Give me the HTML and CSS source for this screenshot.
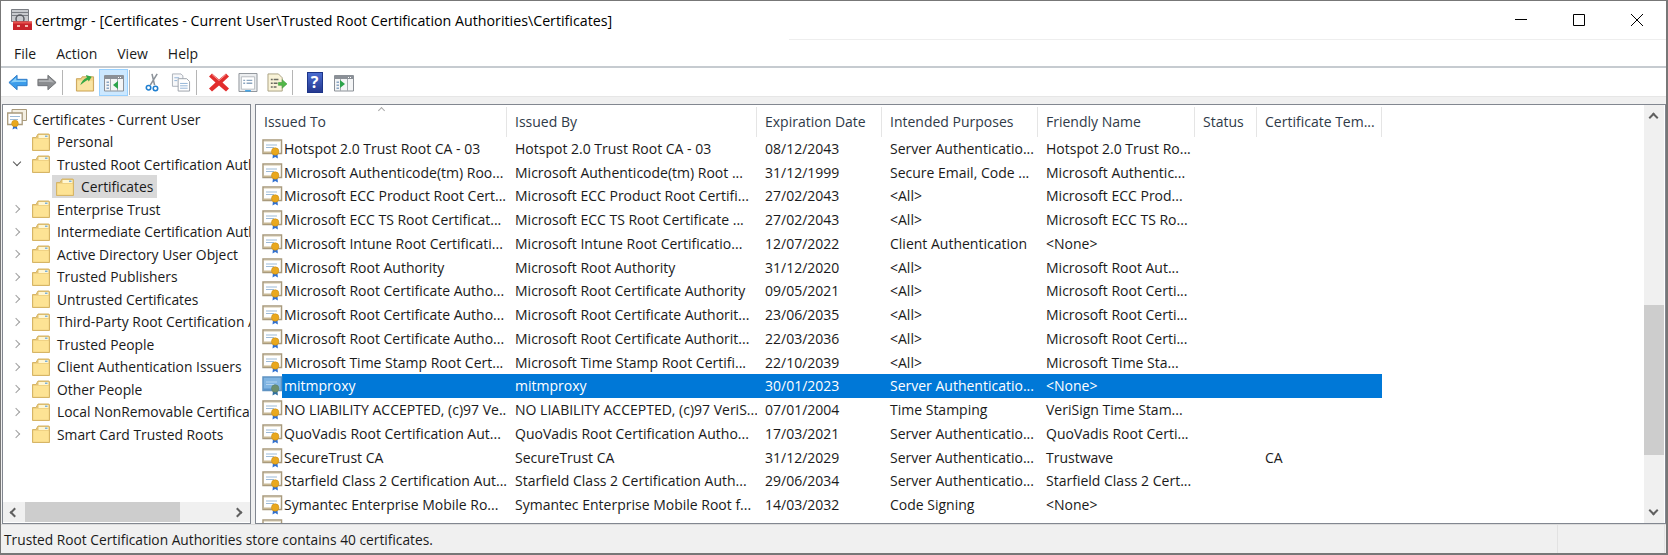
FILE: index.html
```html
<!doctype html>
<html>
<head>
<meta charset="utf-8">
<title>certmgr</title>
<link rel="stylesheet" href="styles.css">
</head>
<body>
<svg class="defs" width="0" height="0">
	<symbol id="folder" viewBox="0 0 18 18">
		<path d="M.5 4.500h3.500L6 1h10.500c.6 0 1 .4 1 1v15.500H.5z" fill="#e3c272" stroke="#d6b566"/>
		<path d="M6.500 2h10v3h-10z" fill="#fff6d2"/>
		<path d="M1.200 5.500h15.600v11.300H1.200z" fill="#fde394"/>
		<path d="M13 2.500h2.500v1.500H13z" fill="#7fb2d8"/>
	</symbol>
	<symbol id="cert" viewBox="0 0 21 21">
		<path d="M1 2h18.500v13.500H1z" fill="#fff" stroke="#a99a7c" stroke-width="1.500"/>
		<path d="M1.500 13.500h11v1.500H1.500z" fill="#c9b994"/>
		<path d="M2 3h16.500v1H2z" fill="#e9e2d0"/>
		<path d="M4 6.500h11v1H4zM4 9h8v1H4z" fill="#9dbbd8"/>
		<path d="M11 15.500l-.5 5 2.700-1.500 2.700 1.500-.5-5z" fill="#2f6fd0"/>
		<circle cx="13.200" cy="13.500" r="3.700" fill="#e9a81e" stroke="#cb8d12" stroke-width=".6"/>
	</symbol>
	<symbol id="cert-sel" viewBox="0 0 21 21">
		<path d="M1 2h18.500v13.500H1z" fill="#7fb4e2" stroke="#5f93c2" stroke-width="1.500"/>
		<path d="M1.500 13.500h11v1.500H1.500z" fill="#5a94cc"/>
		<path d="M4 6.500h11v1H4zM4 9h8v1H4z" fill="#b4d4f0"/>
		<path d="M11 15.500l-.5 5 2.700-1.500 2.700 1.500-.5-5z" fill="#2f6fa0"/>
		<circle cx="13.200" cy="13.500" r="3.700" fill="#6c8f70" stroke="#5c7f68" stroke-width=".6"/>
	</symbol>
	<symbol id="store" viewBox="0 0 20 22">
		<path d="M5 1.500h14.500v11H5z" fill="#f4efe2" stroke="#a99a7c"/>
		<path d="M.7 5h14.500v11.500H.7z" fill="#fff" stroke="#a99a7c" stroke-width="1.300"/>
		<path d="M3 8h10v1H3zM3 11h8v1H3z" fill="#9dbbd8"/>
		<path d="M6.500 17l-1 4.500 2.500-1.300 2.500 1.300-1-4.500z" fill="#2f6fd0"/>
		<circle cx="8" cy="15.500" r="3.300" fill="#e9a81e" stroke="#cb8d12" stroke-width=".6"/>
	</symbol>
	<symbol id="pane" viewBox="0 0 20 18">
		<path d="M.5 1.500h19v15.500H.5z" fill="#f4f5f6" stroke="#8b9097"/>
		<path d="M1 2h18v3H1z" fill="#8b9097"/>
		<path d="M14 3h1v1h-1zM16 3h1v1h-1z" fill="#fff"/>
		<path d="M6.500 5v12M13.500 5v12" stroke="#a5aab0"/>
		<path d="M2.500 7.500h2.500v1.500H2.500zM2.500 10.500h2.500v1.500H2.500zM2.500 13.500h2.500v1.500H2.500z" fill="#8aa6c4"/>
	</symbol>
	<linearGradient id="helpfill" x1="0" y1="0" x2="0" y2="1">
		<stop offset="0" stop-color="#4a6cd0"/>
		<stop offset="1" stop-color="#26388f"/>
	</linearGradient>
</svg>

<div class="window">
	<div class="titlebar">
		<svg class="appicon" viewBox="0 0 21 22">
			<path d="M.5.500h17v12H.5z" fill="#c9cbcf" stroke="#7a7d83"/>
			<path d="M1 3.500h16M1 6.500h16" stroke="#7a7d83"/>
			<circle cx="9" cy="10" r="4" fill="none" stroke="#5a5c62" stroke-width="1.500"/>
			<path d="M2 12.500h19V21H2z" fill="#c8232a"/>
			<path d="M2 12.500h19v2H2z" fill="#e6534f"/>
			<path d="M6 16h3v2H6zM14 16h3v2h-3z" fill="#f3b9b0"/>
		</svg>
		<span class="title">certmgr - [Certificates - Current User\Trusted Root Certification Authorities\Certificates]</span>
		<div class="winbtns">
			<svg viewBox="0 0 12 12"><path d="M0 5.500h12" stroke="#000" fill="none"/></svg>
			<svg viewBox="0 0 12 12"><path d="M.5.500h11v11H.500z" stroke="#000" fill="none"/></svg>
			<svg viewBox="0 0 12 12"><path d="M0 0l12 12M12 0L0 12" stroke="#000" fill="none"/></svg>
		</div>
	</div>
	<div class="menubar">
		<span>File</span><span>Action</span><span>View</span><span>Help</span>
	</div>
	<div class="toolbar">
		<div class="tool">
			<svg viewBox="0 0 22 20"><path d="M1 10l9-8v4.500h11v7H10V18z" fill="#3b9cea" stroke="#2a78c4"/><path d="M3 10l6-5.500v3h11v2H9z" fill="#8cd0f8"/></svg>
		</div>
		<div class="tool">
			<svg viewBox="0 0 22 20"><path d="M21 10l-9-8v4.500H1v7h11V18z" fill="#8a8c8f" stroke="#6c6e72"/><path d="M19 10l-6-5.500v3H2v2h11z" fill="#b0b2b5"/></svg>
		</div>
		<div class="sep"></div>
		<div class="tool">
			<svg viewBox="0 0 20 20"><path d="M1 6h5l1-2h12v15H1z" fill="#f2d589" stroke="#c9a256"/><path d="M2 8h16v10H2z" fill="#f9e4a4"/><path d="M5 13c1-4 4-7 7-8l-1-3 6 2-3 5-1-2c-2 1-5 3-8 6z" fill="#35a845"/></svg>
		</div>
		<div class="tool on">
			<svg class="paneicon"><use href="#pane"/></svg>
			<svg class="mark" viewBox="0 0 6 8"><path d="M5 0v8L0 4z" fill="#2ca34a"/></svg>
		</div>
		<div class="sep"></div>
		<div class="tool">
			<svg viewBox="0 0 16 22"><path d="M14 1L6 14M8 1l3 13" stroke="#8c9299" stroke-width="1.800" fill="none"/><circle cx="4" cy="17" r="2.600" fill="none" stroke="#1f7fd0" stroke-width="1.800"/><circle cx="12" cy="18" r="2.600" fill="none" stroke="#1f7fd0" stroke-width="1.800"/></svg>
		</div>
		<div class="tool">
			<svg viewBox="0 0 20 20"><path d="M1 1h9l2 2v11H1z" fill="#f7f8fa" stroke="#aab0b8"/><path d="M7 6h9l3 3v10H7z" fill="#fff" stroke="#9aa0a8"/><path d="M3 5h5M3 8h3M9 11h8M9 13.500h8M9 16h8" stroke="#8fb2d6"/></svg>
		</div>
		<div class="sep"></div>
		<div class="tool">
			<svg viewBox="0 0 20 18"><path d="M3 0l7 6 7-6 3 3-6.500 6L20 15l-3 3-7-6-7 6-3-3 6.500-6L0 3z" fill="#e22d2d"/><path d="M3 1l7 6 7-6" stroke="#f4908c" fill="none"/></svg>
		</div>
		<div class="tool">
			<svg viewBox="0 0 20 20"><path d="M.5.500h19v19H.5z" fill="#eceef0" stroke="#8b9097"/><path d="M3 4h14v13H3z" fill="#fff" stroke="#b5b9be"/><path d="M5 7h2v1.500H5zM5 10h2v1.500H5zM8.500 7h6v1.500h-6zM8.500 10h6v1.500h-6z" fill="#8ca6c0"/><path d="M7 18h6v1.500H7z" fill="#35a0e8"/></svg>
		</div>
		<div class="tool">
			<svg viewBox="0 0 21 20"><path d="M1 1h11l4 4v14H1z" fill="#f9f3d8" stroke="#a8a080"/><path d="M4 6h2v1.500H4zM4 10h2v1.500H4zM4 14h2v1.500H4zM7 6h5v1.500H7zM7 10h4v1.500H7zM7 14h3v1.500H7z" fill="#6a6a60"/><path d="M12 10h4V7l5 4.500-5 4.500v-3h-4z" fill="#52b848" stroke="#3c9a38" stroke-width=".6"/></svg>
		</div>
		<div class="sep"></div>
		<div class="tool">
			<span class="help">?</span>
		</div>
		<div class="tool">
			<svg class="paneicon"><use href="#pane"/></svg>
			<svg class="mark" viewBox="0 0 6 8"><path d="M0 0v8l5-4z" fill="#2ca34a"/></svg>
		</div>
	</div>

	<div class="panes">
		<div class="tree">
			<div class="tree-items">
				<div class="node root"><svg class="ic-store"><use href="#store"/></svg><span>Certificates - Current User</span></div>
				<div class="node"><i class="tw"></i><svg class="ic"><use href="#folder"/></svg><span>Personal</span></div>
				<div class="node"><i class="tw open"></i><svg class="ic"><use href="#folder"/></svg><span>Trusted Root Certification Authorities</span></div>
				<div class="node sub"><div class="cur"><svg class="ic"><use href="#folder"/></svg><span>Certificates</span></div></div>
				<div class="node"><i class="tw closed"></i><svg class="ic"><use href="#folder"/></svg><span>Enterprise Trust</span></div>
				<div class="node"><i class="tw closed"></i><svg class="ic"><use href="#folder"/></svg><span>Intermediate Certification Authorities</span></div>
				<div class="node"><i class="tw closed"></i><svg class="ic"><use href="#folder"/></svg><span>Active Directory User Object</span></div>
				<div class="node"><i class="tw closed"></i><svg class="ic"><use href="#folder"/></svg><span>Trusted Publishers</span></div>
				<div class="node"><i class="tw closed"></i><svg class="ic"><use href="#folder"/></svg><span>Untrusted Certificates</span></div>
				<div class="node"><i class="tw closed"></i><svg class="ic"><use href="#folder"/></svg><span>Third-Party Root Certification Authorities</span></div>
				<div class="node"><i class="tw closed"></i><svg class="ic"><use href="#folder"/></svg><span>Trusted People</span></div>
				<div class="node"><i class="tw closed"></i><svg class="ic"><use href="#folder"/></svg><span>Client Authentication Issuers</span></div>
				<div class="node"><i class="tw closed"></i><svg class="ic"><use href="#folder"/></svg><span>Other People</span></div>
				<div class="node"><i class="tw closed"></i><svg class="ic"><use href="#folder"/></svg><span>Local NonRemovable Certificates</span></div>
				<div class="node"><i class="tw closed"></i><svg class="ic"><use href="#folder"/></svg><span>Smart Card Trusted Roots</span></div>
			</div>
			<div class="hscroll">
				<i class="chev left"></i>
				<div class="htrack"><div class="hthumb"></div></div>
				<i class="chev right"></i>
			</div>
		</div>

		<div class="list">
			<div class="list-main">
				<div class="row head">
					<div class="sorted">Issued To</div><div>Issued By</div><div>Expiration Date</div><div>Intended Purposes</div><div>Friendly Name</div><div>Status</div><div>Certificate Tem...</div>
				</div>
				<div class="row"><div class="name"><svg class="ic"><use href="#cert"/></svg><span>Hotspot 2.0 Trust Root CA - 03</span></div><div>Hotspot 2.0 Trust Root CA - 03</div><div>08/12/2043</div><div>Server Authenticatio...</div><div>Hotspot 2.0 Trust Ro...</div><div></div><div></div></div>
				<div class="row"><div class="name"><svg class="ic"><use href="#cert"/></svg><span>Microsoft Authenticode(tm) Roo...</span></div><div>Microsoft Authenticode(tm) Root ...</div><div>31/12/1999</div><div>Secure Email, Code ...</div><div>Microsoft Authentic...</div><div></div><div></div></div>
				<div class="row"><div class="name"><svg class="ic"><use href="#cert"/></svg><span>Microsoft ECC Product Root Cert...</span></div><div>Microsoft ECC Product Root Certifi...</div><div>27/02/2043</div><div>&lt;All&gt;</div><div>Microsoft ECC Prod...</div><div></div><div></div></div>
				<div class="row"><div class="name"><svg class="ic"><use href="#cert"/></svg><span>Microsoft ECC TS Root Certificat...</span></div><div>Microsoft ECC TS Root Certificate ...</div><div>27/02/2043</div><div>&lt;All&gt;</div><div>Microsoft ECC TS Ro...</div><div></div><div></div></div>
				<div class="row"><div class="name"><svg class="ic"><use href="#cert"/></svg><span>Microsoft Intune Root Certificati...</span></div><div>Microsoft Intune Root Certificatio...</div><div>12/07/2022</div><div>Client Authentication</div><div>&lt;None&gt;</div><div></div><div></div></div>
				<div class="row"><div class="name"><svg class="ic"><use href="#cert"/></svg><span>Microsoft Root Authority</span></div><div>Microsoft Root Authority</div><div>31/12/2020</div><div>&lt;All&gt;</div><div>Microsoft Root Aut...</div><div></div><div></div></div>
				<div class="row"><div class="name"><svg class="ic"><use href="#cert"/></svg><span>Microsoft Root Certificate Autho...</span></div><div>Microsoft Root Certificate Authority</div><div>09/05/2021</div><div>&lt;All&gt;</div><div>Microsoft Root Certi...</div><div></div><div></div></div>
				<div class="row"><div class="name"><svg class="ic"><use href="#cert"/></svg><span>Microsoft Root Certificate Autho...</span></div><div>Microsoft Root Certificate Authorit...</div><div>23/06/2035</div><div>&lt;All&gt;</div><div>Microsoft Root Certi...</div><div></div><div></div></div>
				<div class="row"><div class="name"><svg class="ic"><use href="#cert"/></svg><span>Microsoft Root Certificate Autho...</span></div><div>Microsoft Root Certificate Authorit...</div><div>22/03/2036</div><div>&lt;All&gt;</div><div>Microsoft Root Certi...</div><div></div><div></div></div>
				<div class="row"><div class="name"><svg class="ic"><use href="#cert"/></svg><span>Microsoft Time Stamp Root Cert...</span></div><div>Microsoft Time Stamp Root Certifi...</div><div>22/10/2039</div><div>&lt;All&gt;</div><div>Microsoft Time Sta...</div><div></div><div></div></div>
				<div class="row selected"><div class="name"><svg class="ic"><use href="#cert-sel"/></svg><span>mitmproxy</span></div><div>mitmproxy</div><div>30/01/2023</div><div>Server Authenticatio...</div><div>&lt;None&gt;</div><div></div><div></div></div>
				<div class="row"><div class="name"><svg class="ic"><use href="#cert"/></svg><span>NO LIABILITY ACCEPTED, (c)97 Ve...</span></div><div>NO LIABILITY ACCEPTED, (c)97 VeriS...</div><div>07/01/2004</div><div>Time Stamping</div><div>VeriSign Time Stam...</div><div></div><div></div></div>
				<div class="row"><div class="name"><svg class="ic"><use href="#cert"/></svg><span>QuoVadis Root Certification Aut...</span></div><div>QuoVadis Root Certification Autho...</div><div>17/03/2021</div><div>Server Authenticatio...</div><div>QuoVadis Root Certi...</div><div></div><div></div></div>
				<div class="row"><div class="name"><svg class="ic"><use href="#cert"/></svg><span>SecureTrust CA</span></div><div>SecureTrust CA</div><div>31/12/2029</div><div>Server Authenticatio...</div><div>Trustwave</div><div></div><div>CA</div></div>
				<div class="row"><div class="name"><svg class="ic"><use href="#cert"/></svg><span>Starfield Class 2 Certification Aut...</span></div><div>Starfield Class 2 Certification Auth...</div><div>29/06/2034</div><div>Server Authenticatio...</div><div>Starfield Class 2 Cert...</div><div></div><div></div></div>
				<div class="row"><div class="name"><svg class="ic"><use href="#cert"/></svg><span>Symantec Enterprise Mobile Ro...</span></div><div>Symantec Enterprise Mobile Root f...</div><div>14/03/2032</div><div>Code Signing</div><div>&lt;None&gt;</div><div></div><div></div></div>
				<div class="row"><div class="name"><svg class="ic"><use href="#cert"/></svg></div></div>
			</div>
			<div class="vscroll">
				<i class="chev up"></i>
				<div class="vtrack"><div class="vthumb"></div></div>
				<i class="chev down"></i>
			</div>
		</div>
	</div>

	<div class="statusbar">
		<div class="status-text">Trusted Root Certification Authorities store contains 40 certificates.</div>
		<div class="status-cell"></div>
	</div>
</div>
</body>
</html>
```

FILE: styles.css
```css
html,body{margin:0;padding:0;background:#fff;}
body{font-family:"Open Sans","Noto Sans",sans-serif;font-size:14px;color:#1a1a1a;}
.defs{display:block;height:0;}
svg{display:block;flex:none;}

.window{width:1668px;height:555px;box-sizing:border-box;border:1px solid #777;border-bottom:2px solid #777;border-right:2px solid #777;display:flex;flex-direction:column;overflow:hidden;}

.titlebar{height:38px;display:flex;align-items:center;padding-left:10px;flex:none;}
.appicon{width:21px;height:22px;margin-right:3px;}
.title{font-size:14.24px;color:#000;}
.winbtns{margin-left:auto;display:flex;gap:46px;padding-right:23px;}
.winbtns svg{width:12px;height:12px;}

.menubar{height:26px;padding-top:1px;display:flex;align-items:center;padding-left:13px;gap:20px;flex:none;background:linear-gradient(#eee,#eee) no-repeat 788px 0/100% 1px;font-size:14px;}
.toolbar{height:27px;display:flex;padding:1px 0 0 2px;border-top:2px solid #c6cbd0;border-bottom:1px solid #e6e6e6;flex:none;}
.tool{width:29px;height:27px;box-sizing:border-box;display:flex;align-items:center;justify-content:center;position:relative;}
.tool svg{width:20px;height:19px;}
.tool.on{background:#cce8ff;border:1px solid #99d1ff;}
.tool .paneicon{width:20px;height:18px;}
.tool .mark{position:absolute;left:13px;top:11px;width:6px;height:8px;}
.tool:last-child .mark{left:11px;}
.sep{width:9px;}
.sep::before{content:"";display:block;width:1px;height:25px;margin:1px 0 0 1px;background:#b5b5b5;}
.help{width:16px;height:21px;background:linear-gradient(#4a6cd0,#26388f);border:1px solid #1c3488;box-sizing:border-box;color:#fff;font-weight:bold;font-size:16px;line-height:19px;text-align:center;}

.panes{flex:1;min-height:0;display:flex;gap:4px;background:#f0f0f0;padding:7px 0 0 1px;}
.tree{width:249px;box-sizing:border-box;background:#fff;border:1px solid #828790;display:flex;flex-direction:column;overflow:hidden;font-size:13.85px;}
.tree-items{flex:1;min-height:0;overflow:hidden;padding-top:3px;}
.node{height:22.5px;display:flex;align-items:center;white-space:nowrap;padding-left:8px;}
.node .tw{width:21px;height:10px;flex:none;position:relative;}
.tw.closed::before,.tw.open::before{content:"";position:absolute;left:2px;top:2px;width:5px;height:5px;border-right:1.2px solid #a0a0a0;border-top:1.2px solid #a0a0a0;transform:rotate(45deg);}
.tw.open::before{left:3px;top:0;border-color:#555;transform:rotate(135deg);}
.node .ic{width:18px;height:18px;margin-right:7px;}
.node.sub{padding-left:49px;}
.cur{height:23px;display:flex;align-items:center;background:#d9d9d9;padding:0 4px;}
.node.root{padding-left:4px;}
.ic-store{width:20px;height:22px;margin-right:6px;}

.hscroll{height:20px;display:flex;align-items:center;background:#f0f0f0;flex:none;margin-bottom:1px;}
.htrack{flex:1;height:20px;}
.hthumb{width:155px;height:20px;background:#cdcdcd;}
.chev{display:block;width:22px;height:20px;position:relative;flex:none;}
.chev::before{content:"";position:absolute;left:8px;top:7px;width:5px;height:5px;border-left:2px solid #606060;border-top:2px solid #606060;}
.chev.left::before{transform:rotate(-45deg);}
.chev.right::before{transform:rotate(135deg);left:6px;}
.chev.up::before{transform:rotate(45deg);left:6px;top:9px;}
.chev.down::before{transform:rotate(225deg);left:6px;top:4px;}
.vscroll .chev{width:20px;}

.list{flex:1;min-width:0;box-sizing:border-box;background:#fff;border:1px solid #828790;display:flex;overflow:hidden;}
.list-main{flex:1;min-width:0;overflow:hidden;}
.row{display:grid;grid-template-columns:251px 250px 125px 156px 157px 62px 125px;width:1126px;height:23.75px;align-items:center;white-space:nowrap;}
.row>div{padding-left:8px;overflow:hidden;}
.row .name{padding-left:6px;display:flex;align-items:center;gap:1px;}
.row .name .ic{width:21px;height:21px;}
.row.selected{background:linear-gradient(#0078d7,#0078d7) no-repeat 26px 0/100% 100%;color:#fff;}
.row.head{height:31.5px;color:#2f3a48;}
.row.head>div{height:31.5px;line-height:33px;box-sizing:border-box;background:linear-gradient(#e5e5e5,#e5e5e5) no-repeat right 2px/1px 100%;}
.sorted{position:relative;}
.sorted::after{content:"";position:absolute;left:123px;top:3px;width:4px;height:4px;border-left:1px solid #aaa;border-top:1px solid #aaa;transform:rotate(45deg);}

.vscroll{width:20px;background:#f0f0f0;display:flex;flex-direction:column;flex:none;margin-right:1px;}
.vtrack{flex:1;position:relative;}
.vthumb{position:absolute;left:0;right:0;top:180px;height:150px;background:#cdcdcd;}

.statusbar{height:28px;display:flex;background:#f0f0f0;border-top:1px solid #dcdcdc;flex:none;line-height:30px;font-size:13.76px;}
.status-text{width:1553px;padding-left:3px;border-right:1px solid #e2e2e2;white-space:nowrap;}
.status-cell{width:106px;border-right:1px solid #e2e2e2;}
```
